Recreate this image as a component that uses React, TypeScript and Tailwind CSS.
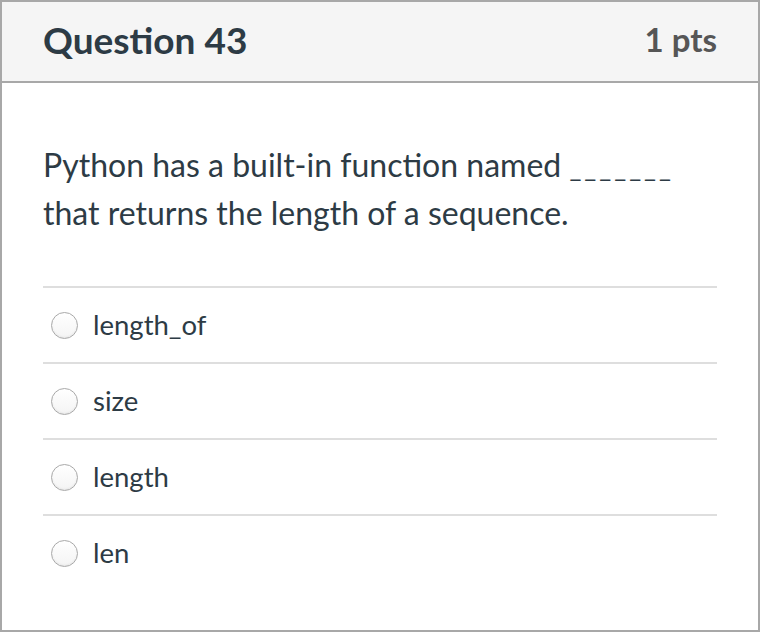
const options = ["length_of", "size", "length", "len"];

function Radio() {
  return (
    <span className="inline-block h-[27px] w-[27px] shrink-0 rounded-full border border-[#a9a9a9] bg-gradient-to-b from-white to-[#f4f4f4] shadow-[inset_0_-1px_2px_rgba(0,0,0,0.06)]" />
  );
}

export default function App() {
  return (
    <div className="min-h-screen bg-white" style={{ fontFamily: "Lato, 'Open Sans', sans-serif" }}>
      <div className="flex h-[632px] w-[760px] flex-col border-2 border-[#a8a8a8] bg-white">
        <div className="flex h-[81px] shrink-0 items-center justify-between border-b-2 border-[#a8a8a8] bg-[#f5f5f5] px-[41px] pb-[3px]">
          <h2 className="text-[37px] font-bold text-[#2d3b45]">Question 43</h2>
          <span className="text-[33px] font-bold text-[#565656]">1 pts</span>
        </div>

        <div className="flex flex-1 flex-col px-[41px] pt-[58px]">
          <p className="text-[32px] leading-[48px] text-[#2d3b45]">
            Python has a built-in function named{" "}
            <span className="text-[26px] leading-none tracking-[3px]">_______</span>
            <br />
            that returns the length of a sequence.
          </p>

          <div className="mt-[49px]">
            {options.map((opt) => (
              <label
                key={opt}
                className="flex h-[76px] cursor-pointer items-center gap-[15px] border-t-2 border-[#dedede] pl-[8px]"
              >
                <Radio />
                <span className="text-[27.5px] text-[#2d3b45]">{opt}</span>
              </label>
            ))}
          </div>
        </div>
      </div>
    </div>
  );
}
